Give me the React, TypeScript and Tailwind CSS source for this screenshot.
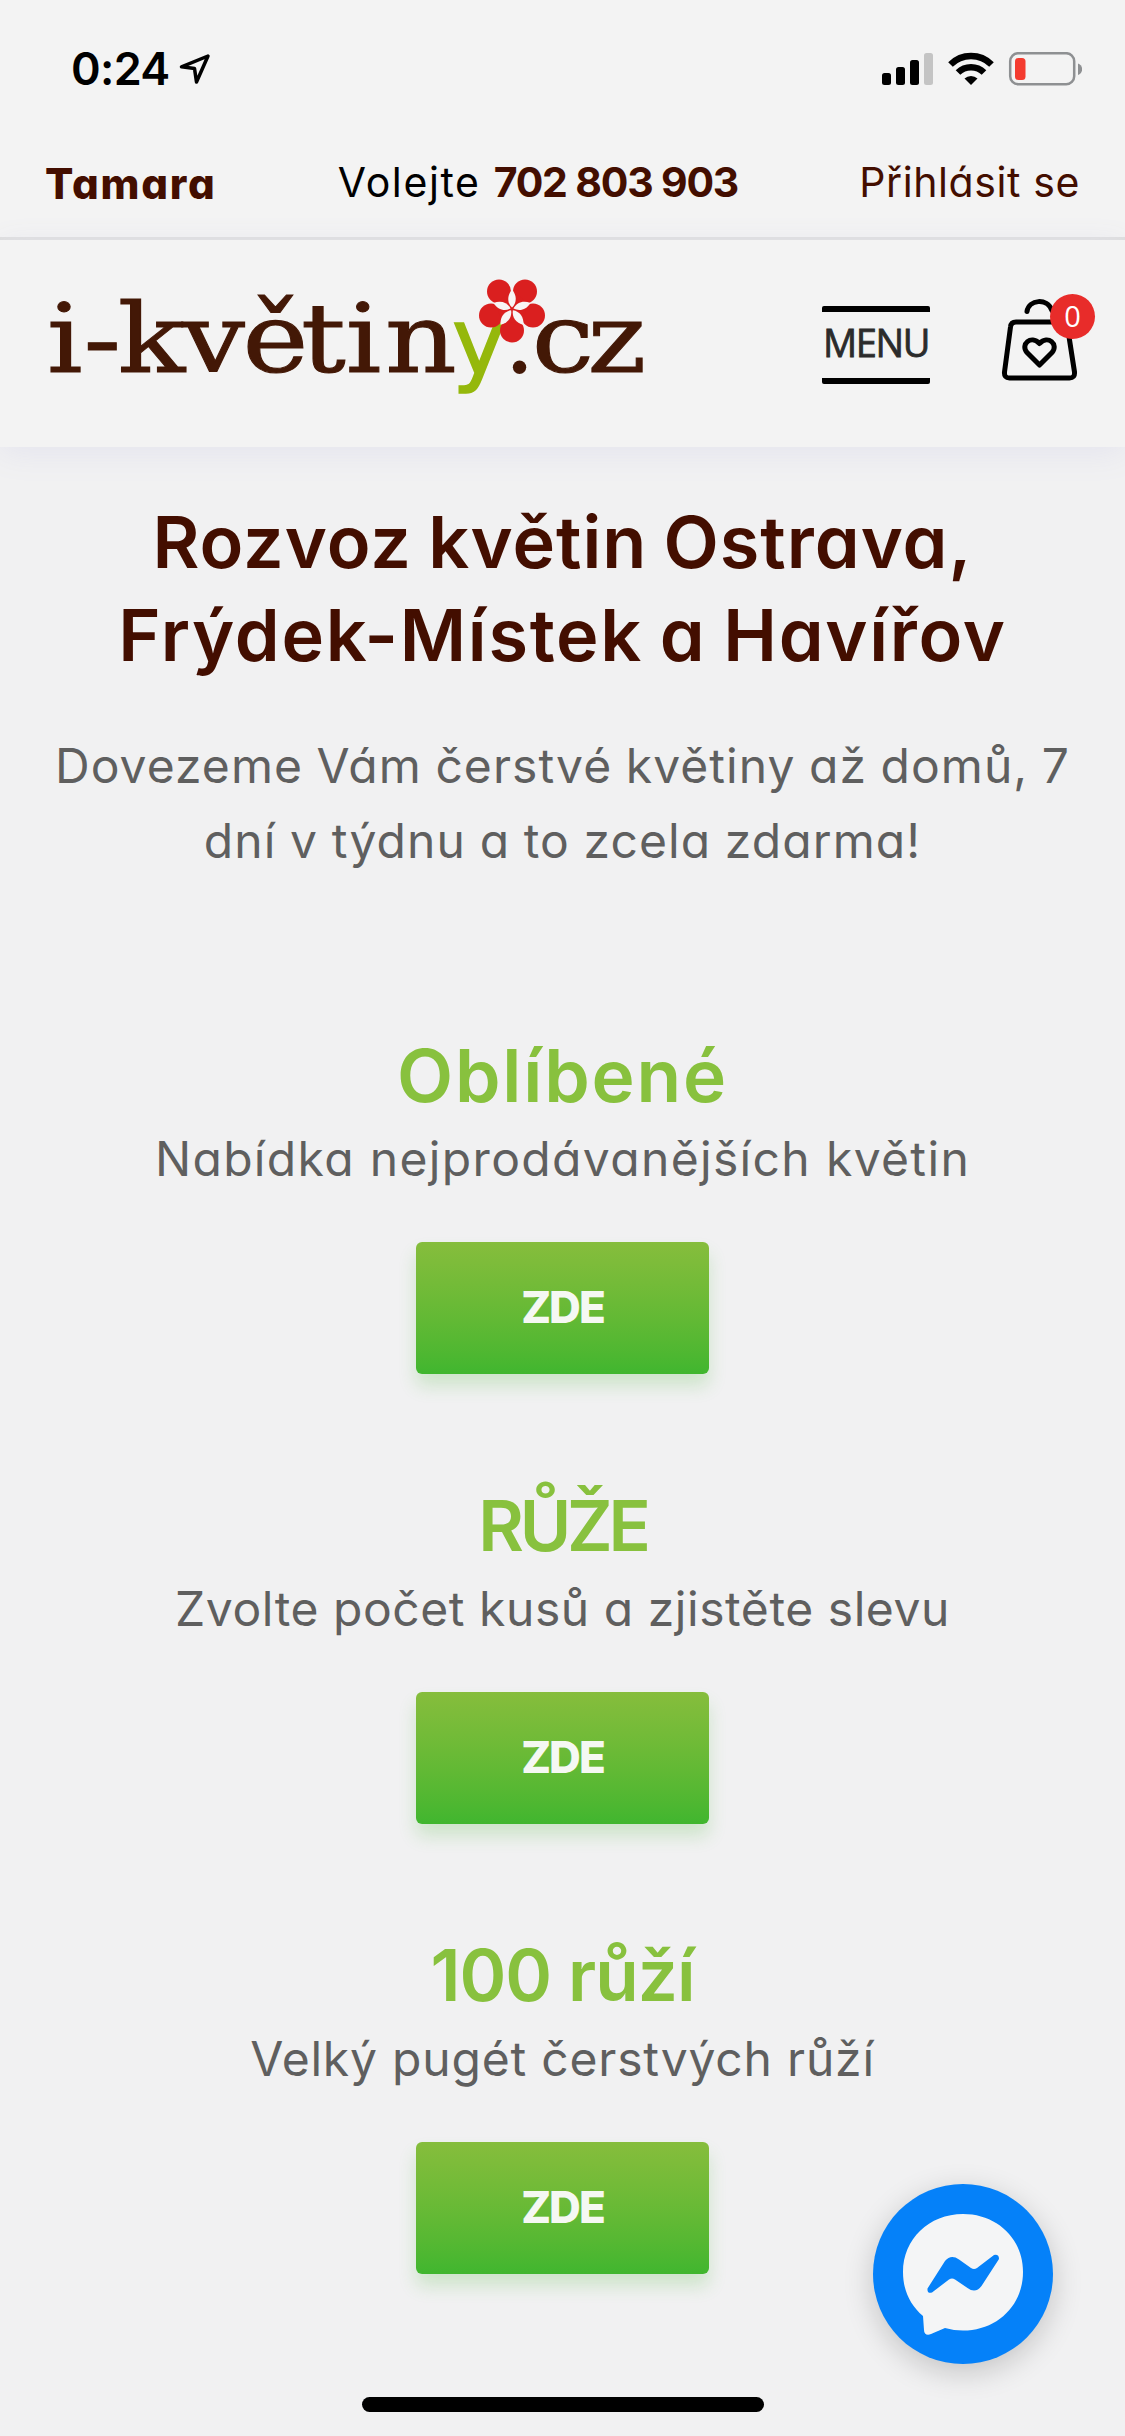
import clsx from "clsx";

type Offer = {
    title: string;
    text: string;
    titleClass: string;
    textClass: string;
}

const offers: Offer[] = [
    { title: "Oblíbené", text: "Nabídka nejprodávanějších květin", titleClass: "text-[73px] tracking-[1.8px]", textClass: "tracking-[1.35px]" },
    { title: "RŮŽE", text: "Zvolte počet kusů a zjistěte slevu", titleClass: "text-[70px] tracking-[-4.2px]", textClass: "tracking-[0.55px]" },
    { title: "100 růží", text: "Velký pugét čerstvých růží", titleClass: "text-[71px] tracking-[-1px]", textClass: "tracking-[0.8px]" },
];

const StatusBar = () => (
    <div className="flex h-[138px] items-start justify-between pl-[71px] pr-[43px] pt-[52px]">
        <div className="flex items-start">
            <span className="w-[108px] text-[45px] font-semibold leading-[34px] tracking-[-0.7px]">0:24</span>
            <svg className="mt-px" width="32" height="32" viewBox="0 0 32 32" fill="none" stroke="#000" strokeWidth="3.5" strokeLinejoin="round">
                <path d="M29 3 2.5 13.8 15.5 15.5 17.5 29Z" />
            </svg>
        </div>
        <svg width="202" height="36" viewBox="0 0 202 36">
            <rect x="2" y="21" width="9" height="12" rx="2.5" />
            <rect x="16" y="15" width="9" height="18" rx="2.5" />
            <rect x="30" y="8" width="9" height="25" rx="2.5" />
            <rect x="44" y="1" width="9" height="32" rx="2.5" fill="#c4c4c4" />
            <g fill="none" stroke="#000" strokeWidth="6.5">
                <path d="M70.5 12.5a29 29 0 0 1 41 0" />
                <path d="M78 20.5a18.5 18.5 0 0 1 26 0" />
            </g>
            <path d="M84.5 26.500a9.5 9.5 0 0 1 13 0L91 33Z" />
            <rect x="130.2" y="1.2" width="64" height="31" rx="8" fill="none" stroke="#8e9092" strokeWidth="2.5" />
            <rect x="135" y="6" width="10.5" height="22" rx="3.5" fill="#f43b2f" />
            <path d="M198 11.5c5.5 1.5 5.5 10 0 11.5Z" fill="#8e9092" />
        </svg>
    </div>
);

const TopLinks = () => (
    <div className="flex h-[102px] items-center justify-between border-b-[3px] border-[#dcdcdc] px-[45px] pb-[9px] text-[41px] text-[#430e00]">
        <span className="text-[42px] font-extrabold tracking-[1.8px]">Tamara</span>
        <span className="tracking-[1.6px] text-black">Volejte <b className="tracking-[-1.2px] text-[#430e00]">702 803 903</b></span>
        <span className="tracking-[0.6px]">Přihlásit se</span>
    </div>
);

const Logo = () => (
    <svg width="606" height="130" viewBox="40 278.5 606 130">
        <g className="font-['DejaVu_Serif',serif]" transform="scale(1.16 1)" fontSize="96" fill="#431806" stroke="#431806" strokeWidth="1">
            <text x="40.500 72 101.500 157 209 259.500 298 332" y="371.5">i-květin</text>
            <text x="458.500 506.500" y="371.5">cz</text>
        </g>
        <text className="font-['DejaVu_Sans',sans-serif]" x="452" y="373" fontSize="92" fill="#95b80c" stroke="#95b80c" strokeWidth="1.5">y</text>
        <text className="font-['DejaVu_Serif',serif]" x="507" y="372" fontSize="72" fontWeight="bold" fill="#431806">.</text>
        <g fill="#da1f1f">
            <circle cx="499" cy="291" r="12" />
            <circle cx="525" cy="291" r="12" />
            <circle cx="491" cy="315" r="12" />
            <circle cx="533" cy="315" r="12" />
            <circle cx="512" cy="330" r="12" />
            <circle cx="512" cy="308" r="14" />
        </g>
        <g fill="#f8f5f5">
            <path id="petal" d="M512 307c-5-5-5-12 0-18 5 6 5 13 0 18Z" />
            <use href="#petal" transform="rotate(72 512 308.5)" />
            <use href="#petal" transform="rotate(144 512 308.5)" />
            <use href="#petal" transform="rotate(216 512 308.5)" />
            <use href="#petal" transform="rotate(288 512 308.5)" />
        </g>
    </svg>
);

const Cart = () => (
    <div className="relative ml-[70px] h-[84px] w-[80px]">
        <svg width="80" height="84" viewBox="1000 301.5 80 84" overflow="visible" fill="none" stroke="#000" strokeWidth="5" strokeLinecap="round" strokeLinejoin="round">
            <path d="M1027 311c2-12 20-14 25-1" />
            <path d="M1016 321.5h46q5 0 5.5 5l7 45q.5 6-5 6h-60q-5.5 0-5-6l6-45q.5-5 5.5-5Z" />
            <path d="M1039.500 364.500 1027 352c-7-8 4-18 12.500-9 8.500-9 19.500 1 12.500 9Z" />
        </svg>
        <span className="absolute -right-[15px] -top-[8px] flex size-[45px] items-center justify-center rounded-full bg-[#e82c2a] font-['Open_Sans',sans-serif] text-[29px] text-white">0</span>
    </div>
);

const Header = () => (
    <header className="relative flex h-[207px] items-center bg-[#f3f3f3] pl-[40px] shadow-[0_6px_30px_#e4e4ee]">
        <Logo />
        <button className="ml-[176px] mt-[3px] h-[78px] w-[108px] rounded-[2px] border-y-[6px] border-black font-['Open_Sans',sans-serif] text-[38px] leading-[57px] tracking-[-1.4px] text-[#2b2b2b] [-webkit-text-stroke:0.8px_#2b2b2b]">
            <span className="-mt-[6px] block">MENU</span>
        </button>
        <Cart />
    </header>
);

const OfferBlock = ({ title, text, titleClass, textClass }: Offer) => (
    <section className="flex h-[450px] flex-col items-center">
        <h2 className={clsx("font-semibold leading-[93px] text-[#88c13e]", titleClass)}>{title}</h2>
        <p className={clsx("-mt-px mb-px text-[48px] leading-[75px] text-[#5f5f5f]", textClass)}>{text}</p>
        <button className="mt-[45px] h-[132px] w-[293px] rounded-md bg-linear-to-b from-[#86bd3c] to-[#40b62f] pb-[2px] text-[44px] font-extrabold tracking-[-2px] text-[#f5f8f3] shadow-[0_12px_18px_#40b62f33]">ZDE</button>
    </section>
);

const MessengerButton = () => (
    <button className="absolute bottom-[72px] right-[72px] size-[180px] rounded-full bg-[#0581f9] shadow-[0_8px_30px_#00000030]">
        <svg width="180" height="180" viewBox="0 0 180 180">
            <path fill="#f4f5f6" d="M90 30c-34 0-60 25-60 58 0 18 7 33 20 44l1 14c0 4 3 6 7 4l14-6q9 2.5 18 2.5c34 0 60-25 60-58.500S124 30 90 30Z" />
            <path fill="#0581f9" d="M54.500 104.500 72 77q6-7 14-1.500L98 84q3 2 6 0l17-13q5-1 5 4l-17.500 27q-6 8-14 2L82 95.500q-3-2-6 0l-17 13q-5 1.500-4.500-4Z" />
        </svg>
    </button>
);

const App = () => (
    <div className="relative h-[2436px] w-[1125px] overflow-hidden bg-[#f1f1f2] font-[Inter,sans-serif] text-black [font-feature-settings:'cv11']">
        <div className="bg-[#f3f3f3]">
            <StatusBar />
            <TopLinks />
        </div>
        <Header />
        <main className="pt-12 text-center">
            <h1 className="text-[72px] font-semibold leading-[93px] text-[#430e00] [word-spacing:-3px]">
                <span className="block tracking-[1px]">Rozvoz květin Ostrava,</span>
                <span className="block tracking-[1.7px]">Frýdek-Místek a Havířov</span>
            </h1>
            <p className="mb-[151px] mt-[47px] whitespace-nowrap text-[48px] leading-[75px] text-[#5f5f5f] [word-spacing:-1px]">
                <span className="block tracking-[1.05px]">Dovezeme Vám čerstvé květiny až domů, 7</span>
                <span className="block tracking-[1.1px]">dní v týdnu a to zcela zdarma!</span>
            </p>
            {offers.map((offer) => <OfferBlock key={offer.title} {...offer} />)}
        </main>
        <MessengerButton />
        <div className="absolute bottom-6 left-[362px] h-[15px] w-[402px] rounded-full bg-black" />
    </div>
);

export default App;
